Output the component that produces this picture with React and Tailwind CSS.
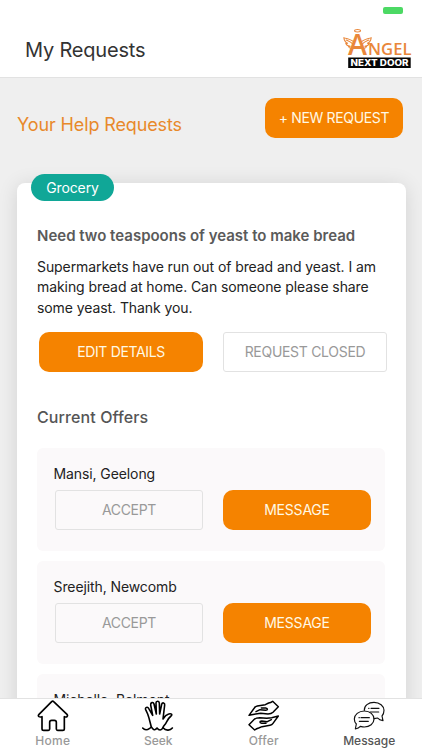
import React from "react";

const offers = [
  { name: "Mansi, Geelong", ready: true },
  { name: "Sreejith, Newcomb", ready: true },
  { name: "Michelle, Belmont", ready: false },
];

function Logo() {
  return (
    <svg width="70" height="40" viewBox="0 0 70 40" overflow="visible">
      <g transform="translate(0.6 0) scale(1.03 1)" fill="none" stroke="#e9873a" strokeWidth="1" strokeLinecap="round" strokeLinejoin="round">
        <ellipse cx="14.5" cy="1.700" rx="2.9" ry="1.200" />
        <path d="M11.5 13.5C9 10.500 5 10 1.200 8.600c.3 3 1.600 4.800 3.700 5.700-.9.200-1.500.1-1.900 0 .8 2 2.400 2.900 4.500 2.900-.6.400-1.200.5-1.800.5 1 1.400 2.500 1.900 4.300 1.600M3.500 11c2 1 4.200 1.800 6.300 3.800" />
        <path d="M17.500 13.500c2.500-3 6.500-3.500 10.300-4.900-.3 3-1.600 4.800-3.700 5.700.9.200 1.500.1 1.900 0-.8 2-2.400 2.900-4.500 2.900.6.400 1.200.5 1.800.5-1 1.400-2.500 1.900-4.300 1.600M25.500 11c-2 1-4.200 1.800-6.300 3.800" />
      </g>
      <text x="6" y="25.500" fill="#e9873a" fontFamily="Open Sans, sans-serif" fontSize="28.500" fontWeight="600" textLength="19" lengthAdjust="spacingAndGlyphs">A</text>
      <text x="26" y="25.500" fill="#e9873a" fontFamily="Open Sans, sans-serif" fontSize="15.400" fontWeight="600" textLength="43.500" lengthAdjust="spacingAndGlyphs">NGEL</text>
      <rect x="6.200" y="28.500" width="62.500" height="10.500" fill="#050505" />
      <text x="8.500" y="36.900" fill="#fff" fontFamily="Inter, sans-serif" fontSize="8.600" fontWeight="800" textLength="58" lengthAdjust="spacingAndGlyphs">NEXT DOOR</text>
    </svg>
  );
}

function HomeIcon() {
  return (
    <svg width="32" height="32" viewBox="51 90 96 96" fill="none" stroke="#000" strokeWidth="5" strokeLinecap="round" strokeLinejoin="round">
      <path d="M95 95Q98 92 101 95L141 133Q144 137 141 140Q139 142 133 140V176Q133 181 128 181H113Q109 181 109 177V157Q109 151 103 151H95Q89 151 89 157V177Q89 181 85 181H71Q66 181 66 176V140Q60 142 57 140Q53 137 57 133Z" />
    </svg>
  );
}

function SeekIcon() {
  return (
    <svg width="32" height="32" viewBox="369 90 96 96" fill="none" stroke="#000" strokeWidth="4.800" strokeLinecap="round" strokeLinejoin="round">
      <path d="M397 171C393 157 391 145 386 132L380 119C377 112 386 109 389 115L401 136L395 105C394 97 403 95 405 102L412 132L411 99C411 92 420 92 421 99L422 132L428 103C430 96 438 98 437 105L432 147C437 139 442 134 449 132C458 129 461 135 456 138C447 145 443 156 439 162C436 166 433 168 432 173" />
      <path d="M371 174C377 181 384 181 392 175L397 171L402 177C406 182 411 178 414 174C420 182 427 182 432 173C440 182 453 183 460 174" />
    </svg>
  );
}

function OfferIcon() {
  return (
    <svg width="32" height="32" viewBox="54 90 96 96" fill="none" stroke="#000" strokeWidth="4.400" strokeLinecap="round" strokeLinejoin="round">
      <path d="M57 136L73 114Q76 109 82 108L106 104L116 99Q122 98 128 94L145 110L129 127Q124 132 114 132L92 130L77 132ZM78 125L90 119L107 121C114 121 114 115 107 114L94 114" />
      <path d="M145 138L129 160Q126 165 120 166L96 170L86 174Q80 176 74 180L57 164L73 148Q78 143 89 143L110 145L125 143ZM124 149L112 155L95 153C88 153 88 159 95 160L108 160" />
    </svg>
  );
}

function MessageIcon() {
  return (
    <svg width="32" height="32" viewBox="369 90 96 96" fill="none" stroke="#111" strokeWidth="3.500" strokeLinecap="round" strokeLinejoin="round">
      <path d="M403 121C402 107 415 97 432 97C449 97 462 108 462 121C462 128 460 134 456 138L459 152C452 151 446 148 443 144L432 146" />
      <path d="M403 123C420 123 432 134 432 147C432 161 419 171 403 171C399 171 395 170 391 169C387 174 382 176 376 177L379 162C375 158 373 153 373 147C373 134 386 123 403 123Z" />
      <path d="M416 115H417M423 115H447M420 126H446M387 143H388M393 143H418M388 154H415" />
    </svg>
  );
}

const tabs = [
  { label: "Home", Icon: HomeIcon, style: "text-[#999] tracking-[0.3px]" },
  { label: "Seek", Icon: SeekIcon, style: "text-[#999]" },
  { label: "Offer", Icon: OfferIcon, style: "text-[#999] tracking-[0.2px]" },
  { label: "Message", Icon: MessageIcon, style: "text-[#555]" },
];

function OfferCard({ name, ready }) {
  return (
    <div className="h-[103px] shrink-0 rounded-md bg-[#fbf9fa] pt-4 pr-3.5 pl-4">
      <p className="h-[26px] pl-[0.5px] text-sm leading-5 tracking-[-0.1px] text-[#222]">{name}</p>
      {ready && (
        <div className="flex justify-between pl-0.5">
          <button className="h-10 w-[148px] rounded-[3px] border border-[#e2e2e2] text-sm tracking-[-0.3px] text-[#999]">
            ACCEPT
          </button>
          <button className="h-10 w-[148px] rounded-[10px] bg-[#f58300] text-sm tracking-[-0.2px] text-[#fff9e5]">
            MESSAGE
          </button>
        </div>
      )}
    </div>
  );
}

function App() {
  return (
    <div className="flex h-[750px] w-[422px] flex-col overflow-hidden bg-[#efefef] font-['Inter',sans-serif]">
      <header className="relative flex h-[78px] shrink-0 items-end justify-between border-b border-[#e2e2e2] bg-white pr-2.5 pb-2 pl-[25px]">
        <div className="absolute top-[7px] right-[19px] h-[7px] w-5 rounded-[2px] bg-[#4cd964]" />
        <h1 className="pb-[5px] text-xl leading-7 tracking-[-0.2px] text-[#333]">My Requests</h1>
        <Logo />
      </header>

      <main className="flex min-h-0 flex-1 flex-col overflow-hidden px-[17px] pt-5">
        <div className="flex h-[85px] shrink-0 justify-between">
          <h2 className="pt-[13px] text-lg leading-7 tracking-[-0.12px] text-[#e8892b]">Your Help Requests</h2>
          <button className="mr-0.5 h-10 w-[138px] rounded-[10px] bg-[#f58300] text-sm tracking-[-0.35px] text-[#fff9e5]">
            + NEW REQUEST
          </button>
        </div>

        <section className="relative flex h-[700px] w-[389px] shrink-0 flex-col rounded-lg bg-white px-5 pt-[42px] shadow-[0_2px_20px_rgba(0,0,0,0.12)]">
          <span className="absolute -top-[9px] left-3.5 flex h-[27px] w-[83px] items-center justify-center rounded-full bg-[#10a797] text-sm tracking-[-0.1px] text-white">
            Grocery
          </span>
          <h3 className="text-[15px] leading-[22px] font-semibold whitespace-nowrap text-[#5a5a5a]">
            Need two teaspoons of yeast to make bread
          </h3>
          <p className="mt-[10px] h-[75px] text-sm leading-[20.3px] tracking-[-0.08px] whitespace-nowrap text-[#222]">
            Supermarkets have run out of bread and yeast. I am
            <br />
            making bread at home. Can someone please share
            <br />
            some yeast. Thank you.
          </p>
          <div className="flex gap-5 pl-0.5">
            <button className="h-10 w-[164px] shrink-0 rounded-[10px] bg-[#f58300] text-sm tracking-[-0.35px] text-[#fff9e5]">
              EDIT DETAILS
            </button>
            <button className="h-10 w-[164px] shrink-0 rounded-[3px] border border-[#e2e2e2] text-sm tracking-[-0.3px] text-[#999]">
              REQUEST CLOSED
            </button>
          </div>
          <h3 className="mt-[34px] text-base leading-[22px] font-medium tracking-[0.1px] text-[#555]">Current Offers</h3>
          <div className="mt-5 mr-px flex flex-col gap-2.5">
            {offers.map((offer) => (
              <OfferCard key={offer.name} name={offer.name} ready={offer.ready} />
            ))}
          </div>
        </section>
      </main>

      <nav className="relative z-10 grid h-[52px] shrink-0 grid-cols-4 border-t border-[#e2e2e2] bg-white">
        {tabs.map(({ label, Icon, style }) => (
          <div key={label} className="flex flex-col items-center pt-px">
            <Icon />
            <span className={`text-xs leading-[18px] font-medium ${style}`}>{label}</span>
          </div>
        ))}
      </nav>
    </div>
  );
}

export default App;
